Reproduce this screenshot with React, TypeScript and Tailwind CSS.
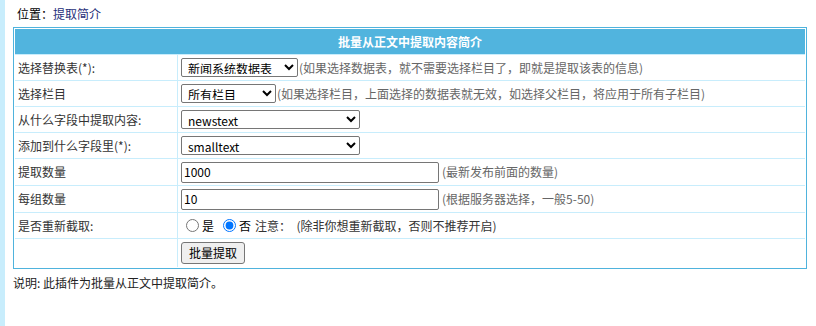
import React from "react";

const font = "font-['Microsoft_YaHei','Noto_Sans_CJK_SC',sans-serif]";

function Label({ children }: { children: React.ReactNode }) {
  return <div className="flex items-center bg-white pl-[3px] text-[#333]">{children}</div>;
}

function Cell({ children, h = "h-[25px]" }: { children?: React.ReactNode; h?: string }) {
  return <div className={`flex items-center bg-white pl-[3px] ${h}`}>{children}</div>;
}

const selectCls =
  "h-[19px] border border-[#767676] rounded-[2px] bg-white text-[12px] leading-[normal] pt-0 pb-[2px] text-black pl-[2px] outline-none";
const inputCls =
  "h-[21px] w-[258px] border border-[#767676] rounded-[2px] bg-white text-[12px] leading-[normal] pt-0 pb-[2px] text-black px-[2px] outline-none";

export default function App() {
  return (
    <div className={`flex h-[326px] w-[816px] bg-white text-[12px] leading-[14px] ${font}`}>
      {/* frame strip */}
      <div className="w-[5px] shrink-0 bg-[#c8edfc]" />

      <div className="ml-[8px] flex flex-col">
        <div className="pl-[4px] pt-[7px] text-black">
          位置：<span className="text-[#1f2f7a]">提取简介</span>
        </div>

        {/* form table */}
        <div className="mt-[6px] w-[794px] border border-[#4fb3dd] bg-white p-px">
          <div className="grid grid-cols-[162px_1fr] gap-px bg-[#c8edfc]">
            <div className="col-span-2 flex h-[25px] items-center justify-center bg-[#51b4de] font-bold text-white">
              批量从正文中提取内容简介
            </div>

            <Label>选择替换表(*):</Label>
            <Cell>
              <select className={`${selectCls} w-[117px]`} defaultValue="news">
                <option value="news">新闻系统数据表</option>
              </select>
              <span className="ml-[1px] text-[#666]">(如果选择数据表，就不需要选择栏目了，即就是提取该表的信息)</span>
            </Cell>

            <Label>选择栏目</Label>
            <Cell>
              <select className={`${selectCls} w-[95px]`} defaultValue="all">
                <option value="all">所有栏目</option>
              </select>
              <span className="ml-[1px] text-[#666]">(如果选择栏目，上面选择的数据表就无效，如选择父栏目，将应用于所有子栏目)</span>
            </Cell>

            <Label>从什么字段中提取内容:</Label>
            <Cell>
              <select className={`${selectCls} w-[179px]`} defaultValue="newstext">
                <option value="newstext">newstext</option>
              </select>
            </Cell>

            <Label>添加到什么字段里(*):</Label>
            <Cell>
              <select className={`${selectCls} w-[179px]`} defaultValue="smalltext">
                <option value="smalltext">smalltext</option>
              </select>
            </Cell>

            <Label>提取数量</Label>
            <Cell h="h-[26px]">
              <input className={inputCls} defaultValue="1000" />
              <span className="ml-[3px] text-[#666]">(最新发布前面的数量)</span>
            </Cell>

            <Label>每组数量</Label>
            <Cell h="h-[26px]">
              <input className={inputCls} defaultValue="10" />
              <span className="ml-[3px] text-[#666]">(根据服务器选择，一般5-50)</span>
            </Cell>

            <Label>是否重新截取:</Label>
            <Cell>
              <label className="flex items-center">
                <input type="radio" name="re" className="m-0 ml-[5px] mr-[3px] h-[13px] w-[13px]" />是
              </label>
              <label className="ml-[4px] flex items-center">
                <input type="radio" name="re" defaultChecked className="m-0 ml-[5px] mr-[3px] h-[13px] w-[13px]" />否
              </label>
              <span className="ml-[4px] text-[#333]">注意：&nbsp;&nbsp;(除非你想重新截取，否则不推荐开启)</span>
            </Cell>

            <div className="bg-white" />
            <Cell h="h-[28px]">
              <button
                type="button"
                className="h-[22px] w-[64px] rounded-[3px] border border-[#767676] bg-[#efefef] text-[12px] leading-[20px] text-black"
              >
                批量提取
              </button>
            </Cell>
          </div>
        </div>

        <div className="mt-[7px] text-[#222]">说明: 此插件为批量从正文中提取简介。</div>
      </div>
    </div>
  );
}
